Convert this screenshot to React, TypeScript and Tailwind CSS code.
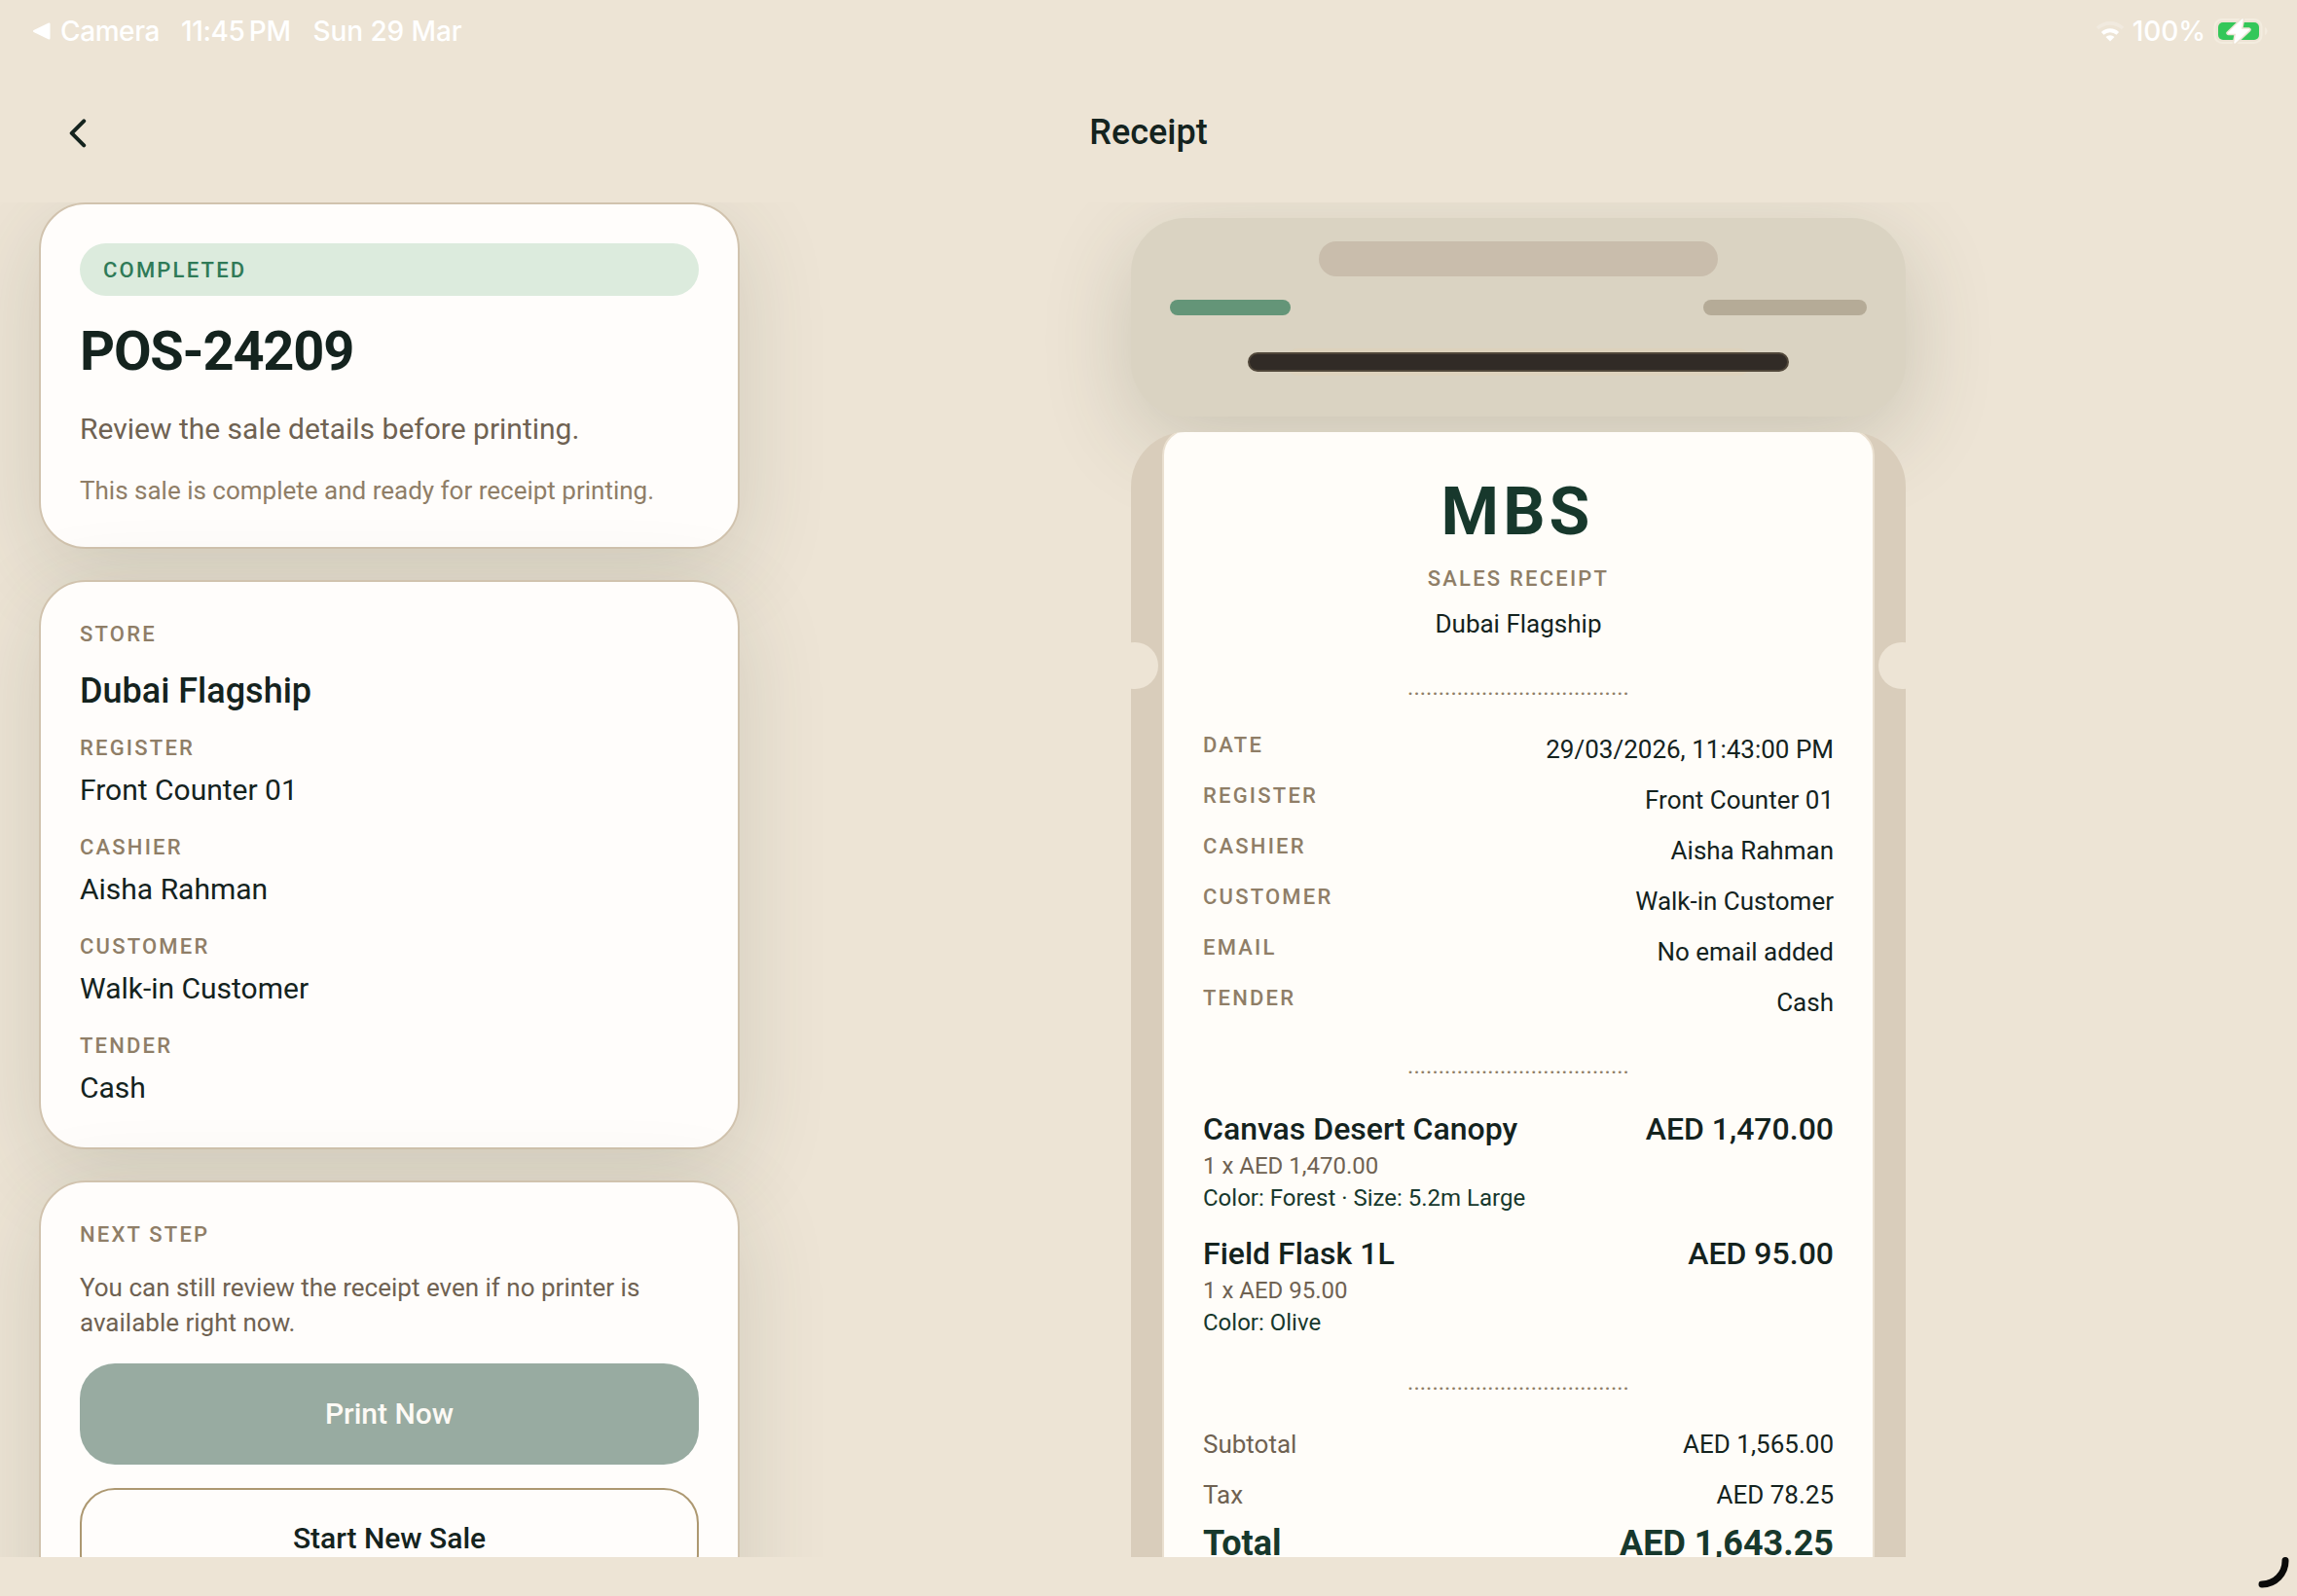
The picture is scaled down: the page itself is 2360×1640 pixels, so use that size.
import React from 'react';

const STORE_FIELDS = [
  { label: 'REGISTER', value: 'Front Counter 01' },
  { label: 'CASHIER', value: 'Aisha Rahman' },
  { label: 'CUSTOMER', value: 'Walk-in Customer' },
  { label: 'TENDER', value: 'Cash' },
];

const RECEIPT_META = [
  { label: 'DATE', value: '29/03/2026, 11:43:00 PM' },
  { label: 'REGISTER', value: 'Front Counter 01' },
  { label: 'CASHIER', value: 'Aisha Rahman' },
  { label: 'CUSTOMER', value: 'Walk-in Customer' },
  { label: 'EMAIL', value: 'No email added' },
  { label: 'TENDER', value: 'Cash' },
];

const ITEMS = [
  {
    name: 'Canvas Desert Canopy',
    total: 'AED 1,470.00',
    unit: '1 x AED 1,470.00',
    options: 'Color: Forest · Size: 5.2m Large',
  },
  { name: 'Field Flask 1L', total: 'AED 95.00', unit: '1 x AED 95.00', options: 'Color: Olive' },
];

const Label = ({ children }: { children: React.ReactNode }) => (
  <p className="text-[22px] leading-[28px] font-medium tracking-[2.2px] text-[#8f7e67]">{children}</p>
);

const Card = ({ className, children }: { className: string; children: React.ReactNode }) => (
  <section
    className={`w-[720px] shrink-0 rounded-[48px] border-2 border-[#d1c3ae] bg-[#fffdfb] p-10 shadow-[0_24px_92px_rgba(60,70,50,0.155)] ${className}`}
  >
    {children}
  </section>
);

const Separator = ({ className }: { className: string }) => (
  <p className={`text-center text-[24px] leading-[33px] text-[#8f7e67] ${className}`}>{'.'.repeat(36)}</p>
);

const StatusBar = () => (
  <div className="flex h-[64px] items-center justify-between pr-[30px] pl-[33px] font-['Inter'] text-[28px] font-medium tracking-[-0.4px] text-white">
    <div className="flex items-center">
      <svg width="20" height="18" viewBox="0 0 20 18" className="mr-[9px]">
        <path d="M2 9 17.500 1.500v15z" fill="#fff" stroke="#fff" strokeWidth="2" strokeLinejoin="round" />
      </svg>
      <span>Camera</span>
      <span className="ml-[22px]">11:45&#8239;PM</span>
      <span className="ml-[23px] tracking-[-0.1px]">Sun 29 Mar</span>
    </div>
    <div className="flex items-center">
      <svg width="30" height="22" viewBox="0 0 30 22" fill="none" className="mr-[8px]">
        <path d="M2 8a19 19 0 0 1 26 0" stroke="#f1eadf" strokeWidth="3.600" />
        <path d="M7.200 13.300a11.500 11.500 0 0 1 15.600 0" stroke="#fff" strokeWidth="3.800" />
        <path d="M15 21.500l-4.500-4.500a6.500 6.500 0 0 1 9 0z" fill="#fff" />
      </svg>
      <span className="tracking-[-0.1px]">100%</span>
      <svg width="56" height="28" viewBox="0 0 56 28" fill="none" className="ml-[8px]">
        <rect x="1.500" y="2" width="48" height="24" rx="7.500" stroke="#f3ecdf" strokeWidth="2" />
        <path d="M53 10v8c3.500-1.500 3.500-6.500 0-8z" fill="#f3ecdf" />
        <rect x="5" y="5" width="42" height="18" rx="5" fill="#34c759" />
        <path d="M30 2 15.500 16H24l-2 10 14.500-13.500H28z" stroke="#ede4d5" strokeWidth="4.500" strokeLinejoin="round" />
        <path d="M30 2 15.500 16H24l-2 10 14.500-13.500H28z" fill="#fff" stroke="#fff" strokeWidth="1.500" strokeLinejoin="round" />
      </svg>
    </div>
  </div>
);

const Printer = () => (
  <div className="relative flex h-[204px] w-[796px] shrink-0 flex-col rounded-[56px] bg-[#dad3c2] px-10 pt-6 shadow-[0_24px_92px_rgba(60,70,50,0.2)]">
    <div className="mx-auto h-[36px] w-[410px] rounded-full bg-[#c9bdac]" />
    <div className="mt-6 flex justify-between">
      <div className="h-4 w-[124px] rounded-full bg-[#649578]" />
      <div className="h-4 w-[168px] rounded-full bg-[#b5ab97]" />
    </div>
    <div className="mx-auto mt-[34px] flex h-[28px] w-[480px] items-center justify-center rounded-full bg-[#ddd2bc]">
      <div className="h-5 w-[556px] shrink-0 rounded-full border-2 border-[#4f4639] bg-[#312b26]" />
    </div>
  </div>
);

const Receipt = () => (
  <div className="relative mt-4 h-[1300px] w-[796px] shrink-0 overflow-hidden rounded-[56px] bg-[#d9cdbb] px-8">
    {/* Punch holes on the paper tray */}
    <div className="absolute top-[216px] -left-5 h-12 w-12 rounded-full bg-[#ede4d5]" />
    <div className="absolute top-[216px] -right-5 h-12 w-12 rounded-full bg-[#ede4d5]" />

    <div className="-mt-1 h-[1400px] rounded-[28px] border-2 border-[#eae0d0] bg-[#fffdf9] px-10 pt-[44px]">
      <h2 className="pr-[2px] text-center text-[68px] leading-[80px] font-bold tracking-[4px] text-[#17382c]">MBS</h2>
      <p className="mt-[15px] text-center text-[22px] leading-[28px] font-medium tracking-[2.2px] text-[#8f7e67]">
        SALES RECEIPT
      </p>
      <p className="mt-[14px] text-center text-[26px] leading-[36px]">Dubai Flagship</p>
      <Separator className="mt-[31px]" />

      <div className="mt-[29px] flex flex-col gap-4">
        {RECEIPT_META.map((row) => (
          <div key={row.label} className="flex justify-between">
            <Label>{row.label}</Label>
            <p className="text-[26px] leading-[36px]">{row.value}</p>
          </div>
        ))}
      </div>

      <Separator className="mt-[31px]" />

      <div className="mt-[26px] flex flex-col gap-[18px]">
        {ITEMS.map((item) => (
          <div key={item.name}>
            <div className="flex justify-between text-[32px] leading-[44px] font-medium">
              <p>{item.name}</p>
              <p>{item.total}</p>
            </div>
            <p className="text-[24px] leading-[33px] text-[#6f6252]">{item.unit}</p>
            <p className="text-[24px] leading-[33px] text-[#17382c]">{item.options}</p>
          </div>
        ))}
      </div>

      <Separator className="mt-[28px]" />

      <div className="mt-[29px] flex flex-col gap-4 text-[26px] leading-[36px]">
        <div className="flex justify-between">
          <p className="text-[#6f6252]">Subtotal</p>
          <p>AED 1,565.00</p>
        </div>
        <div className="flex justify-between">
          <p className="text-[#6f6252]">Tax</p>
          <p>AED 78.25</p>
        </div>
      </div>
      <div className="mt-[10px] flex justify-between text-[36px] leading-[44px] font-bold text-[#17382c]">
        <p>Total</p>
        <p>AED 1,643.25</p>
      </div>
    </div>
  </div>
);

export default function App() {
  return (
    <div className="relative flex h-[1640px] w-[2360px] flex-col overflow-hidden bg-[#ede4d5] font-['Roboto',sans-serif] text-[#14231e]">
      <StatusBar />

      <header className="grid h-[144px] grid-cols-[1fr_auto_1fr] items-center pb-[1px]">
        <button className="ml-[68px] w-6">
          <svg width="24" height="32" viewBox="0 0 24 32" fill="none">
            <path d="M18.200 4.300 5.700 16.800l12.500 12.500" stroke="#14231e" strokeWidth="4" strokeLinecap="round" strokeLinejoin="round" />
          </svg>
        </button>
        <h1 className="text-[36px] font-medium">Receipt</h1>
      </header>

      <main className="flex h-[1392px] overflow-hidden">
        <div className="flex w-[920px] shrink-0 flex-col gap-8 pl-10">
          <Card className="h-[356px]">
            <div className="flex h-[54px] items-center rounded-full bg-[#dcebdd] px-6 text-[22px] font-medium tracking-[2.2px] text-[#2f7a57]">
              COMPLETED
            </div>
            <h2 className="mt-[25px] text-[56px] leading-[64px] font-bold tracking-[-1.2px]">POS-24209</h2>
            <p className="mt-[27px] text-[30px] leading-[42px] text-[#6f6252]">Review the sale details before printing.</p>
            <p className="mt-[24px] text-[26px] leading-[36px] text-[#8f7e67]">
              This sale is complete and ready for receipt printing.
            </p>
          </Card>

          <Card className="h-[585px]">
            <Label>STORE</Label>
            <p className="mt-[20px] text-[36px] leading-[48px] font-medium">Dubai Flagship</p>
            <div className="mt-[21px] flex flex-col gap-6">
              {STORE_FIELDS.map((field) => (
                <div key={field.label}>
                  <Label>{field.label}</Label>
                  <p className="mt-2 text-[30px] leading-[42px]">{field.value}</p>
                </div>
              ))}
            </div>
          </Card>

          <Card className="h-[560px]">
            <Label>NEXT STEP</Label>
            <p className="mt-[22px] text-[26px] leading-[36px] text-[#6f6252]">
              You can still review the receipt even if no printer is available right now.
            </p>
            <button className="mt-6 h-[104px] w-full rounded-[36px] bg-[#98aba1] pb-[2px] text-[30px] font-medium text-[#fdfaf5]">
              Print Now
            </button>
            <button className="mt-6 h-[104px] w-full rounded-[36px] border-2 border-[#ad9871] pb-[2px] text-[30px] font-medium">
              Start New Sale
            </button>
          </Card>
        </div>

        <div className="flex flex-1 flex-col pt-4 pl-[242px]">
          <Printer />
          <Receipt />
        </div>
      </main>

      {/* Pencil corner hint */}
      <svg width="40" height="40" viewBox="0 0 40 40" fill="none" className="absolute right-0 bottom-0">
        <path d="M28 3.500A24 24 0 0 1 4 28" stroke="#0a0a0a" strokeWidth="7" strokeLinecap="round" />
      </svg>
    </div>
  );
}
